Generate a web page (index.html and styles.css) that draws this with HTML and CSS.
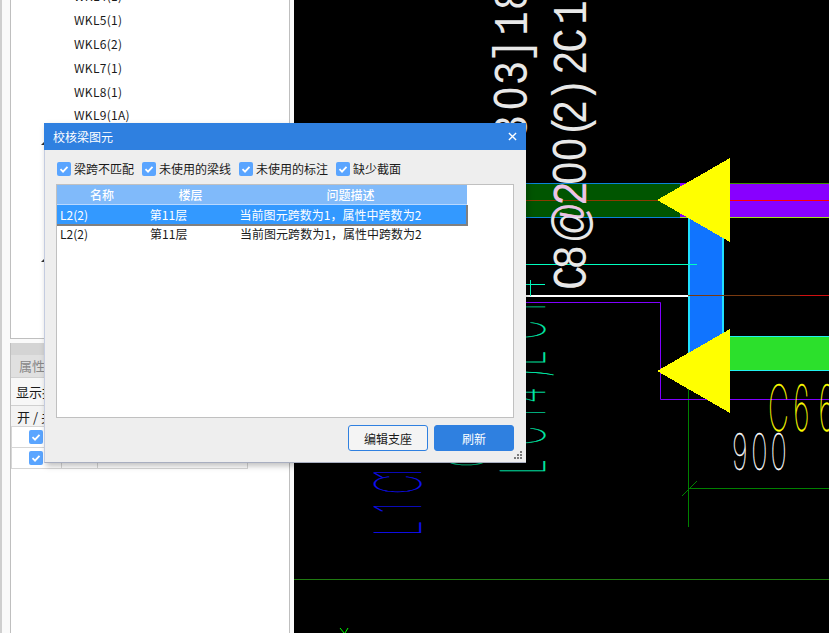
FILE: index.html
```html
<!DOCTYPE html>
<html lang="zh">
<head>
<meta charset="utf-8">
<title>校核梁图元</title>
<link rel="stylesheet" href="styles.css">
</head>
<body>
<div class="app">
  <aside class="side">
    <div class="tree">
      <ul class="tree-list">
        <li>WKL4(1)</li><li>WKL5(1)</li><li>WKL6(2)</li><li>WKL7(1)</li><li>WKL8(1)</li><li>WKL9(1A)</li>
      </ul>
      <span class="caret caret-a"></span>
      <span class="caret caret-b"></span>
    </div>
    <div class="props">
      <div class="props-bar"></div>
      <div class="props-tab">属性列表</div>
      <div class="props-filter">显示抗震</div>
      <div class="grid">
        <div class="grid-row grid-head"><span class="c1">开 / 关</span><span class="c2"></span><span class="c3"></span></div>
        <div class="grid-row"><span class="c1"><span class="check"><svg viewBox="0 0 14 14"><path d="M3.5 7.2 6 9.6 10.5 4.8"/></svg></span></span><span class="c2"></span><span class="c3"></span></div>
        <div class="grid-row"><span class="c1"><span class="check"><svg viewBox="0 0 14 14"><path d="M3.5 7.2 6 9.6 10.5 4.8"/></svg></span></span><span class="c2"></span><span class="c3"></span></div>
      </div>
    </div>
  </aside>
  <main class="canvas">
    <svg class="cad" viewBox="294 0 535 633" width="535" height="633">
      <defs>
        <clipPath id="band"><rect x="526" y="184" width="160" height="33"/></clipPath>
      </defs>
      <g class="crisp">
        <rect x="526" y="183" width="154" height="35" fill="#005500"/>
        <rect x="680" y="183" width="149" height="35" fill="#8800ff"/>
        <rect x="526" y="183" width="154" height="1" fill="#0a84d8"/>
        <rect x="526" y="217" width="154" height="1" fill="#0a84d8"/>
        <rect x="680" y="217" width="149" height="1" fill="#a0e020"/>
        <rect x="730" y="183" width="99" height="1" fill="#3a9000"/>
        <rect x="526" y="200" width="154" height="1" fill="#8b3a00"/>
        <rect x="730" y="200" width="99" height="1" fill="#ff0000"/>
        <rect x="688" y="218" width="36" height="140" fill="#1074ff"/>
        <rect x="688" y="218" width="2" height="140" fill="#20e0ff"/>
        <rect x="722" y="218" width="2" height="140" fill="#20e0ff"/>
        <rect x="730" y="336" width="99" height="35" fill="#2ce02c"/>
        <rect x="730" y="336" width="99" height="1" fill="#20f0f0"/>
        <rect x="730" y="370" width="99" height="1" fill="#20f0f0"/>
        <rect x="526" y="295" width="162" height="2" fill="#ffffff"/>
        <rect x="688" y="295" width="112" height="1" fill="#7a3a10"/>
        <rect x="800" y="295" width="29" height="1" fill="#d01010"/>
        <rect x="526" y="264" width="171" height="1" fill="#00ffc0"/>
        <rect x="526" y="284" width="19" height="1" fill="#00ffc0"/>
        <rect x="530" y="280" width="1" height="16" fill="#00ffc0"/>
        <rect x="294" y="579" width="535" height="1" fill="#1f7a10"/>
        <rect x="688" y="370" width="1" height="157" fill="#008000"/>
        <rect x="688" y="488" width="141" height="1" fill="#008000"/>
      </g>
      <path class="line" stroke="#008000" d="M682 496 697 481"/>
      <path class="line" stroke="#8000ff" d="M526 302.5H660.5V399.5H829"/>
      <path class="line" stroke="#00ff00" d="M340 628 344 633M348 628 345 633" stroke-width="1.5"/>

      <text class="mono" transform="translate(586 290) rotate(-90) scale(.85 1)" x="0 24 55 99 124 152 179 195 221 240 253 279 312 340">C8<tspan class="sans">@</tspan>2<tspan class="sans">00</tspan>(2) 2C16</text>
      <g clip-path="url(#band)">
        <text class="mono pink" transform="translate(586 290) rotate(-90) scale(.85 1)" x="0 24 55 99 124 152 179 195 221 240 253 279 312 340">C8<tspan class="sans">@</tspan>2<tspan class="sans">00</tspan>(2) 2C16</text>
      </g>
      <text class="mono" transform="translate(527 290) rotate(-90) scale(.85 1)" x="177 212 241 267 290 299 329">3<tspan class="sans">0</tspan>3] 18</text>

      <text class="thin teal" transform="translate(545 474) rotate(-90) scale(.42 1)" x="0 69 131 169 231 259 321 383">LC14)LC1</text>
      <text class="thin teal-small" transform="translate(488 467) rotate(-90) scale(.42 1)">C</text>
      <text class="thin blue" transform="translate(421 536) rotate(-90) scale(.42 1)" x="0 55 100 135">L1C1</text>
      <text class="thin yellow" transform="translate(768 431) scale(.45 1)" x="0 56 112">C66</text>
      <text class="thin white" transform="translate(732 470) scale(.55 1)" x="0 35 70">900</text>

      <polygon class="crisp" fill="#ffff00" points="657,200 730,158 730,242"/>
      <polygon class="crisp" fill="#ffff00" points="657,371 730,329 730,413"/>
    </svg>
  </main>

  <section class="dialog">
    <header class="dialog-title">
      <span>校核梁图元</span>
      <svg class="close" viewBox="0 0 10 10"><path d="M1 1 9 9M9 1 1 9"/></svg>
    </header>
    <div class="dialog-body">
      <div class="filters">
        <label class="filter"><span class="check"><svg viewBox="0 0 14 14"><path d="M3.5 7.2 6 9.6 10.5 4.8"/></svg></span>梁跨不匹配</label>
        <label class="filter"><span class="check"><svg viewBox="0 0 14 14"><path d="M3.5 7.2 6 9.6 10.5 4.8"/></svg></span>未使用的梁线</label>
        <label class="filter"><span class="check"><svg viewBox="0 0 14 14"><path d="M3.5 7.2 6 9.6 10.5 4.8"/></svg></span>未使用的标注</label>
        <label class="filter"><span class="check"><svg viewBox="0 0 14 14"><path d="M3.5 7.2 6 9.6 10.5 4.8"/></svg></span>缺少截面</label>
      </div>
      <div class="table">
        <div class="t-row t-head"><span class="t1">名称</span><span class="t2">楼层</span><span class="t3">问题描述</span></div>
        <div class="t-row t-sel"><span class="t1">L2(2)</span><span class="t2">第11层</span><span class="t3">当前图元跨数为1，属性中跨数为2</span></div>
        <div class="t-row t-plain"><span class="t1">L2(2)</span><span class="t2">第11层</span><span class="t3">当前图元跨数为1，属性中跨数为2</span></div>
      </div>
      <div class="actions">
        <button class="btn btn-line">编辑支座</button>
        <button class="btn btn-fill">刷新</button>
      </div>
    </div>
    <svg class="grip" viewBox="0 0 8 8"><path d="M6 0h2v2H6zM3 3h2v2H3zM6 3h2v2H6zM0 6h2v2H0zM3 6h2v2H3zM6 6h2v2H6z"/></svg>
  </section>
</div>
</body>
</html>
```
FILE: styles.css
```css
* { box-sizing: border-box; }
html, body { margin: 0; height: 100%; overflow: hidden; }
body {
  font-family: "Noto Sans CJK SC", "Noto Sans", sans-serif;
  font-size: 12px;
  color: #1a1a1a;
  background: #fff;
}
.app {
  position: relative;
  display: flex;
  width: 829px;
  height: 633px;
  overflow: hidden;
}

/* left panel */
.side {
  width: 294px;
  flex: none;
  display: flex;
  flex-direction: column;
  padding-left: 10px;
  padding-right: 4px;
  position: relative;
  background:
    linear-gradient(#cfcfcf, #cfcfcf) 0 0 / 2px 100% no-repeat,
    #fafafa;
}
.tree {
  position: relative;
  height: 339px;
  background: #fff;
  border: 1px solid #bfbfbf;
  border-top: 0;
  overflow: hidden;
}
.tree-list {
  list-style: none;
  margin: -16px 0 0;
  padding: 0 0 0 63px;
}
.tree-list li {
  height: 23.9px;
  line-height: 23.9px;
  letter-spacing: .3px;
  white-space: nowrap;
}
.caret {
  position: absolute;
  left: 30px;
  width: 0;
  height: 0;
  border-left: 4px solid transparent;
  border-bottom: 4px solid #333;
}
.caret-a { top: 141px; }
.caret-b { top: 258px; }
.props {
  flex: 1;
  margin-top: 4px;
  background: #fff;
  border-left: 1px solid #bfbfbf;
  border-right: 1px solid #bfbfbf;
}
.props-bar { height: 12px; background: #d4d4d4; }
.props-tab {
  height: 23px;
  line-height: 22px;
  padding-left: 8px;
  background: #e0e0e0;
  color: #888;
  font-size: 13px;
  border-bottom: 1px solid #d0d0d0;
}
.props-filter {
  height: 28px;
  line-height: 27px;
  padding-left: 5px;
  font-size: 13px;
  background: #f7f7f7;
  border-bottom: 1px solid #d0d0d0;
}
.grid {
  width: 237px;
  background: #fff;
}
.grid-row {
  display: flex;
  height: 21px;
  border-bottom: 1px solid #d6d6d6;
  border-right: 1px solid #d6d6d6;
  border-left: 1px solid #d6d6d6;
}
.grid-head { background: #f3f3f3; font-size: 13px; border-left: 0; }
.c1 {
  width: 50px;
  padding-left: 17px;
  display: flex;
  align-items: center;
  border-right: 1px solid #d6d6d6;
}
.grid-head .c1 { padding-left: 6px; white-space: nowrap; }
.c2 { width: 36px; border-right: 1px solid #d6d6d6; }
.c3 { flex: 1; }

/* shared checkbox */
.check {
  flex: none;
  display: block;
  width: 14px;
  height: 14px;
  border-radius: 2px;
  background: #5aa5ff;
}
.check svg { display: block; width: 14px; height: 14px; }
.check path { fill: none; stroke: #fff; stroke-width: 1.8; }

/* CAD canvas */
.canvas {
  flex: 1;
  position: relative;
  background: #000;
  overflow: hidden;
}
.cad { position: absolute; inset: 0; display: block; }
.crisp { shape-rendering: crispEdges; }
.line { fill: none; stroke-width: 1; }
.mono {
  font-family: "Liberation Mono", monospace;
  font-size: 48px;
  fill: #e8e8e8;
}
.sans { font-family: "Liberation Sans", sans-serif; }
.pink { fill: #f2a6e6; opacity: .55; }
.thin {
  font-family: Inter, Roboto, sans-serif;
  font-weight: 100;
  stroke-width: .35px;
}
.teal { fill: #00f0b0; stroke: #00f0b0; font-size: 62px; }
.teal-small { fill: #00f0b0; stroke: #00f0b0; font-size: 58px; }
.blue { fill: #1010ff; stroke: #1010ff; font-size: 64px; }
.yellow { fill: #ffff00; stroke: #ffff00; font-size: 64px; }
.white { fill: #ffffff; stroke: #ffffff; font-size: 50px; }

/* dialog */
.dialog {
  position: absolute;
  left: 44px;
  top: 123px;
  width: 482px;
  height: 340px;
  display: flex;
  flex-direction: column;
  background: #eeeeee;
  border-left: 1px solid #c4cce0;
  border-bottom: 1px solid #a8aec0;
  box-shadow: 2px 3px 6px rgba(0, 0, 0, .25);
}
.dialog-title {
  height: 27px;
  flex: none;
  margin-left: -1px;
  padding: 0 9px;
  background: #2f80e0;
  color: #fff;
  display: flex;
  align-items: center;
  justify-content: space-between;
}
.close { width: 9px; height: 9px; margin-bottom: 1px; }
.close path { stroke: #fff; stroke-width: 1.5; fill: none; }
.dialog-body {
  flex: 1;
  display: flex;
  flex-direction: column;
  padding: 12px 12px 11px 11px;
}
.filters { display: flex; gap: 8px; height: 22px; padding-left: 1px; }
.filter {
  display: flex;
  gap: 3px;
  align-items: center;
  height: 14px;
  line-height: 14px;
  white-space: nowrap;
}
.table {
  flex: 1;
  background: #fff;
  border: 1px solid #c0c0c0;
}
.t-row {
  display: flex;
  width: 410px;
  height: 19px;
  line-height: 19px;
  letter-spacing: .03px;
  white-space: nowrap;
}
.t-row span { display: block; }
.t1, .t2 { width: 90px; padding-left: 3px; }
.t3 { width: 230px; padding-left: 3px; }
.t-head {
  height: 20px;
  line-height: 20px;
  background: #80bafa;
  color: #fff;
  font-weight: 500;
  text-align: center;
  border-bottom: 1px solid #b8d8ff;
}
.t-head span { padding: 0 3px 0 0; }
.t-head .t1 { padding: 0; }
.t-sel {
  width: 411px;
  height: 21px;
  background: #3399ff;
  color: #fff;
  border-bottom: 2px solid #808080;
  border-right: 2px solid #808080;
}
.t-plain { line-height: 16px; }
.actions {
  display: flex;
  justify-content: flex-end;
  gap: 6px;
  margin-top: 7px;
}
.btn {
  width: 80px;
  height: 26px;
  padding: 0;
  font: inherit;
  border-radius: 3px;
  border: 1px solid #2f80e0;
}
.btn-line { background: #f4f4f4; color: #1a1a1a; }
.btn-fill { background: #2f80e0; color: #fff; }
.grip {
  position: absolute;
  right: 4px;
  bottom: 3px;
  width: 8px;
  height: 8px;
}
.grip path { fill: #7a7a7a; }
```
